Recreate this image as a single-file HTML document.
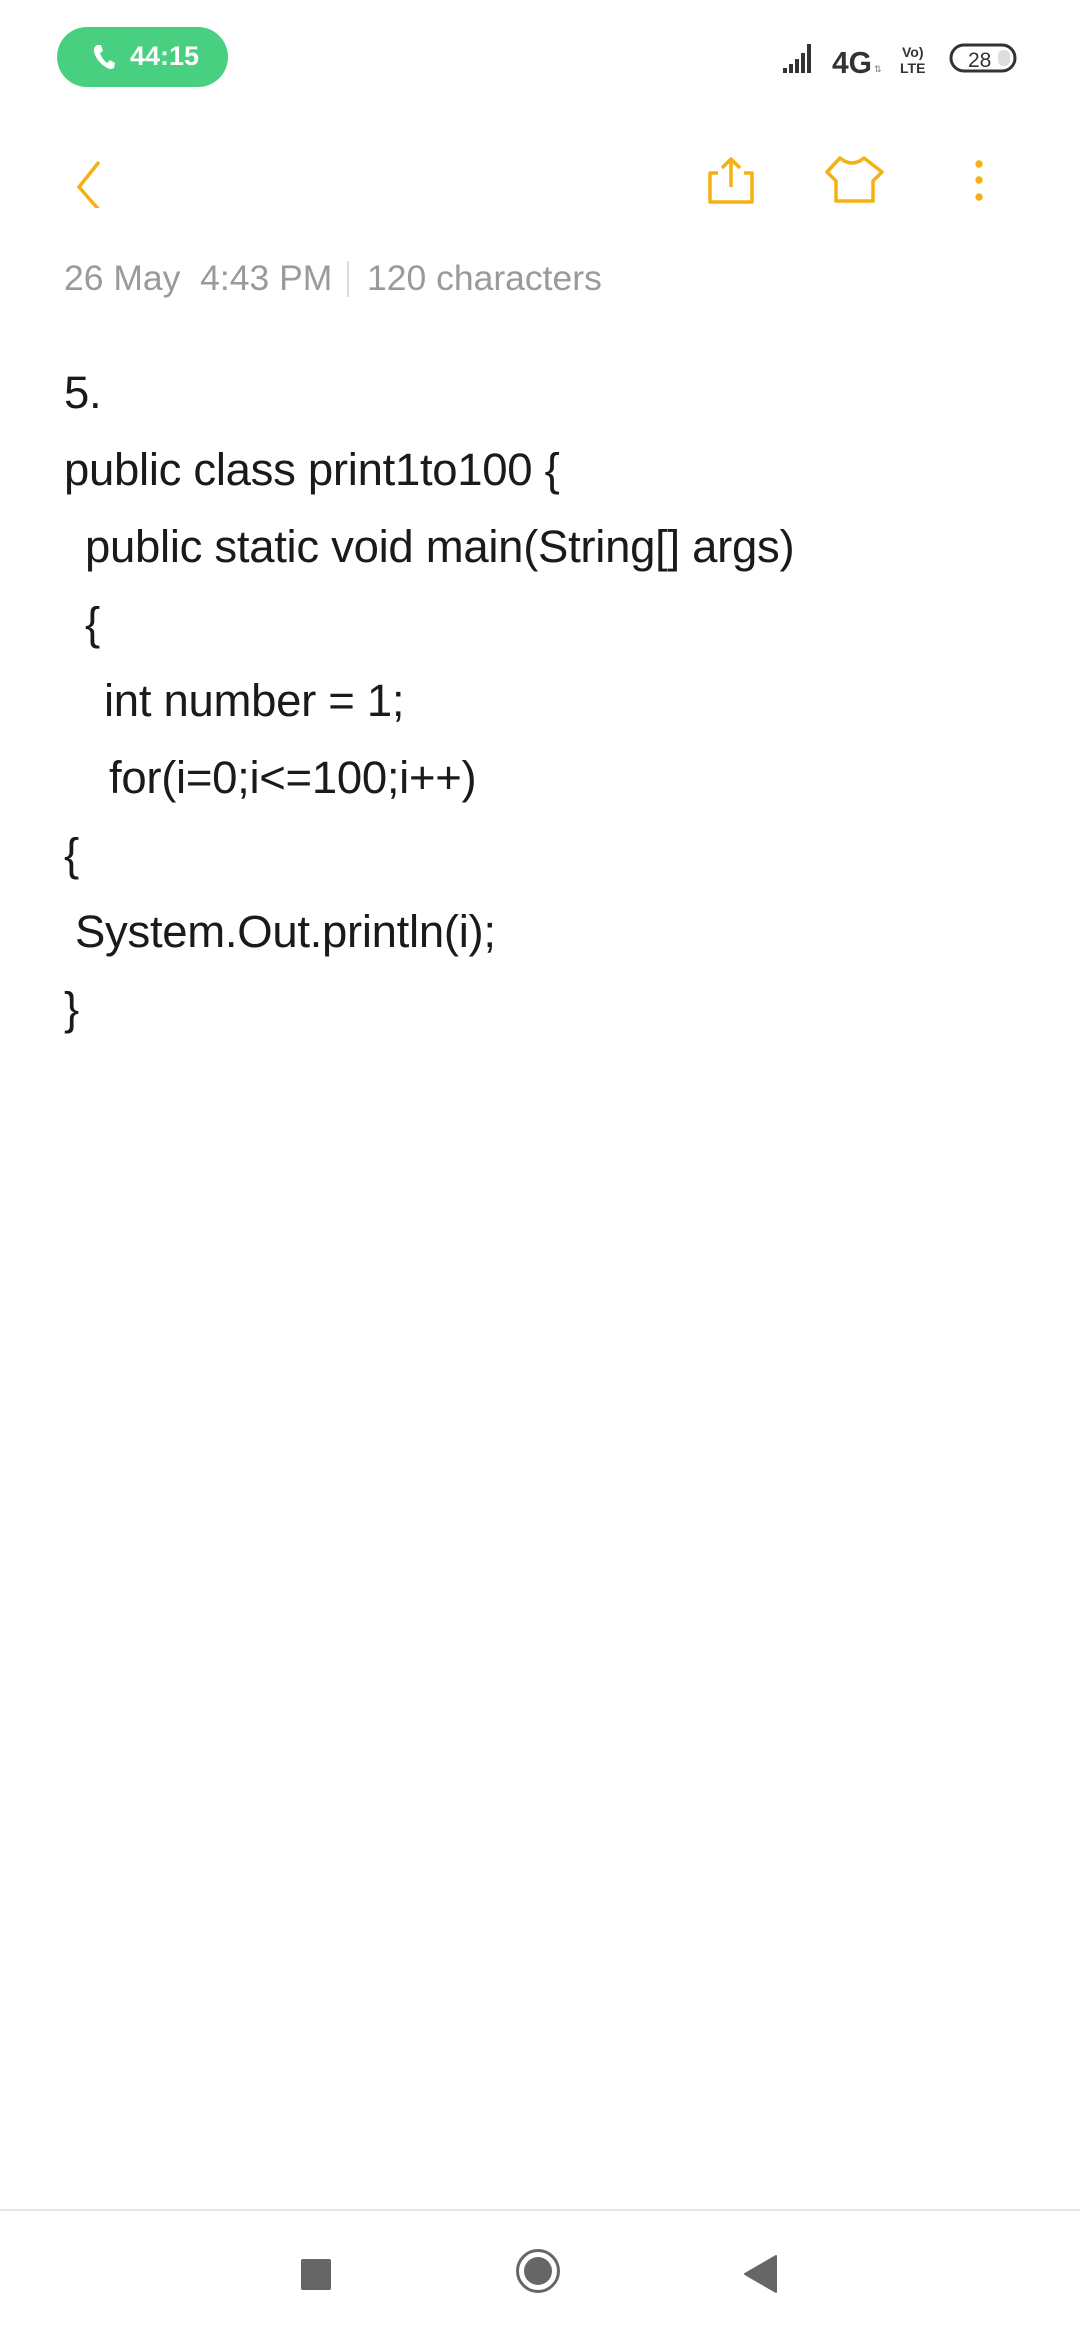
<!DOCTYPE html>
<html><head><meta charset="utf-8"><style>
html,body{margin:0;padding:0;background:#fff;width:1080px;height:2340px;overflow:hidden;position:relative;font-family:"Liberation Sans",sans-serif;}
.abs{position:absolute;}
.pill{left:57px;top:27px;width:171px;height:60px;border-radius:30px;background:#48CF7F;}
.pill span{position:absolute;left:73px;top:14px;color:#fff;font-weight:bold;font-size:27px;}
.date{left:64px;top:258px;font-size:35.5px;color:#9a9a9a;white-space:pre;}
.line{position:absolute;font-size:45.5px;color:#1a1a1a;white-space:pre;letter-spacing:-0.3px;}
</style></head><body>
<div class="abs pill"><svg class="abs" style="left:34px;top:16px" width="26" height="28" viewBox="0 0 26 28"><path d="M6 2 L10 2 L12 8 L9 10 Q11 16 16 20 L19 17 L24 20 L23 25 Q20 27 16 25 Q6 19 3 9 Q2 4 6 2Z" fill="#fff"/></svg><span>44:15</span></div>
<svg class="abs" style="left:780px;top:42px" width="240" height="34" viewBox="0 0 240 34">
<rect x="3" y="26" width="4" height="5" fill="#333"/><rect x="9" y="22" width="4" height="9" fill="#333"/><rect x="15" y="17" width="4" height="14" fill="#333"/><rect x="21" y="11" width="4" height="20" fill="#333"/><rect x="27" y="2" width="4" height="29" fill="#333"/>
<text x="52" y="31" font-family="Liberation Sans" font-weight="bold" font-size="31" fill="#333" textLength="40" lengthAdjust="spacingAndGlyphs">4G</text>
<text x="94" y="30" font-size="9" fill="#777" font-family="Liberation Sans">⇅</text>
<text x="122" y="15" font-size="14" font-weight="bold" fill="#333" font-family="Liberation Sans">Vo)</text>
<text x="120" y="31" font-size="14" font-weight="bold" fill="#333" font-family="Liberation Sans">LTE</text>
<rect x="171" y="3" width="64" height="26" rx="13" fill="none" stroke="#333" stroke-width="3"/>
<rect x="218" y="8" width="12" height="16" rx="5" fill="#ddd"/>
<text x="188" y="25" font-size="21" fill="#333" font-family="Liberation Sans">28</text>
</svg>
<svg class="abs" style="left:70px;top:158px" width="40" height="50"><path d="M29 4 L9 29 L29 52" fill="none" stroke="#F5B014" stroke-width="3.5"/></svg>
<svg class="abs" style="left:700px;top:150px" width="200" height="60" viewBox="700 150 200 60">
<path d="M718 173 H710 V202 H752 V173 H744" fill="none" stroke="#F5B014" stroke-width="3.5" stroke-linejoin="round"/>
<path d="M731 187 V159 M722 168 L731 159 L740 168" fill="none" stroke="#F5B014" stroke-width="3.5" stroke-linejoin="round"/>
<path d="M840 158 Q852 168 864 158 L882 172 L873 181 V201 H836 V181 L827 172 Z" fill="none" stroke="#F5B014" stroke-width="3.5" stroke-linejoin="round"/>
</svg>
<svg class="abs" style="left:970px;top:155px" width="20" height="50"><circle cx="9" cy="9" r="3.7" fill="#F5B014"/><circle cx="9" cy="25" r="3.7" fill="#F5B014"/><circle cx="9" cy="42" r="3.7" fill="#F5B014"/></svg>
<div class="abs date">26 May  4:43 PM</div>
<div class="abs" style="left:347px;top:261px;width:2px;height:36px;background:#ddd"></div>
<div class="abs date" style="left:367px">120 characters</div>
<div class="line" style="left:64px;top:367px">5.</div>
<div class="line" style="left:64px;top:444px">public class print1to100 {</div>
<div class="line" style="left:85px;top:521px">public static void main(String[] args)</div>
<div class="line" style="left:85px;top:598px">{</div>
<div class="line" style="left:104px;top:675px">int number = 1;</div>
<div class="line" style="left:109px;top:752px">for(i=0;i&lt;=100;i++)</div>
<div class="line" style="left:64px;top:829px">{</div>
<div class="line" style="left:75px;top:906px">System.Out.println(i);</div>
<div class="line" style="left:64px;top:983px">}</div>
<div class="abs" style="left:0;top:2209px;width:1080px;height:2px;background:#e6e6e6"></div>
<div class="abs" style="left:301px;top:2259px;width:30px;height:31px;border-radius:2px;background:#666"></div>
<div class="abs" style="left:516px;top:2249px;width:44px;height:44px;border-radius:50%;border:3px solid #666;box-sizing:border-box;"></div>
<div class="abs" style="left:524px;top:2257px;width:28px;height:28px;border-radius:50%;background:#666"></div>
<svg class="abs" style="left:740px;top:2254px" width="40" height="40"><path d="M36 2 V38 L5 20 Z" fill="#666" stroke="#666" stroke-width="2" stroke-linejoin="round"/></svg>
</body></html>
